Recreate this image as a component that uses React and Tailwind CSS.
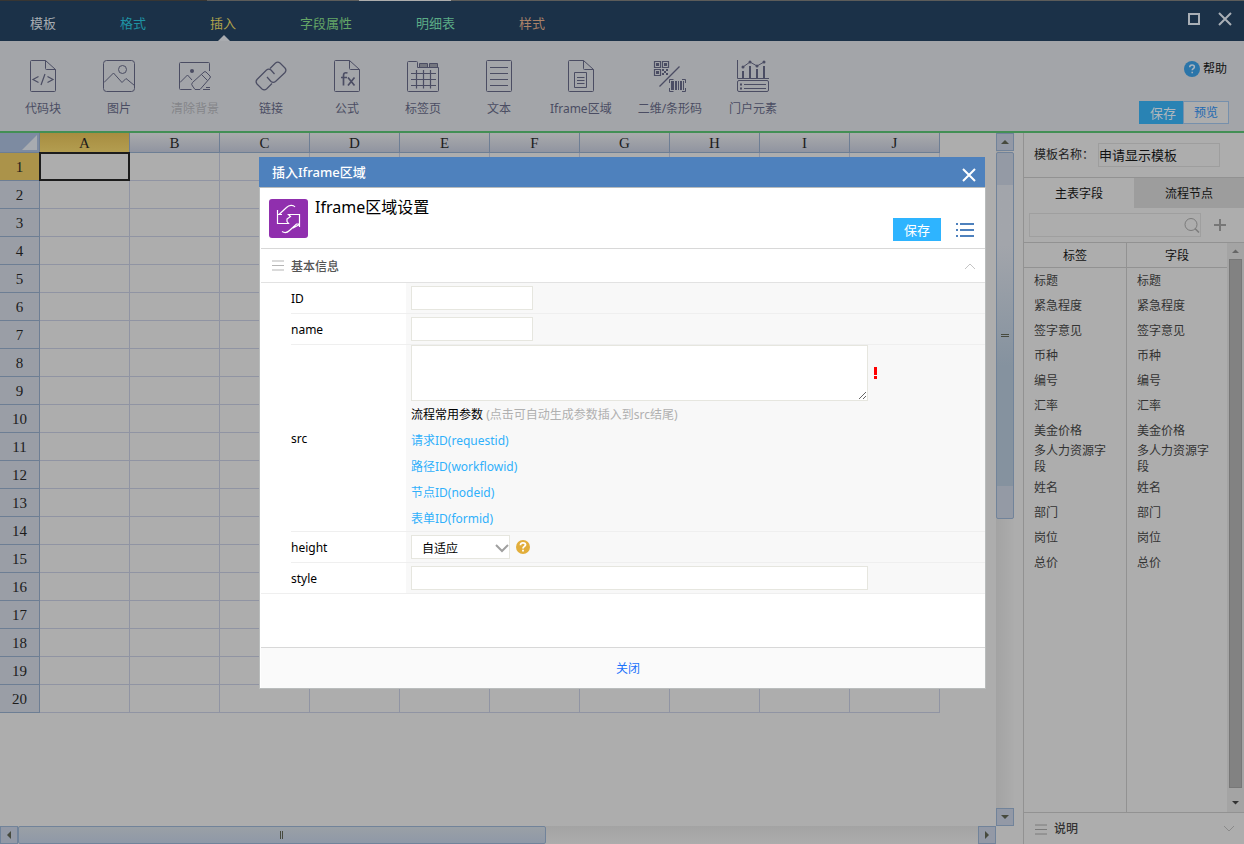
import React from "react";

const FONT = "font-['Noto_Sans','Noto_Sans_CJK_SC',sans-serif]";

const TABS = [
  { label: "模板", color: "text-[#a6abb1]" },
  { label: "格式", color: "text-[#1f93a4]" },
  { label: "插入", color: "text-[#b0a24c]", active: true },
  { label: "字段属性", color: "text-[#64a566]" },
  { label: "明细表", color: "text-[#5bab86]" },
  { label: "样式", color: "text-[#a98168]" },
];

function Icon({ children }) {
  return (
    <svg width="34" height="34" viewBox="0 0 34 34" fill="none" stroke="#4b4d63" strokeWidth="1" aria-hidden="true">
      {children}
    </svg>
  );
}

const PAGE = (
  <>
    <path d="M19.500 1.500H5.500a1 1 0 0 0-1 1v29a1 1 0 0 0 1 1h23a1 1 0 0 0 1-1V10.500Z" />
    <path d="M19.500 1.500v8a1 1 0 0 0 1 1h9" />
  </>
);

const TOOLS = [
  {
    label: "代码块",
    icon: (
      <Icon>
        {PAGE}
        <path d="M12.500 17.500 7 20.500l5.500 3M21.500 17.500 27 20.500l-5.500 3M19 15l-4 11" strokeWidth="1.200" />
      </Icon>
    ),
  },
  {
    label: "图片",
    icon: (
      <Icon>
        <rect x="1.500" y="1.500" width="31" height="31" rx="3" />
        <circle cx="20.500" cy="10.500" r="4" />
        <path d="M2 23.500 11.500 14 20 23.500l4-4 8.500 7" />
      </Icon>
    ),
  },
  {
    label: "清除背景",
    disabled: true,
    icon: (
      <Icon>
        <path d="M31.500 12V4.500a1 1 0 0 0-1-1h-28a1 1 0 0 0-1 1v25a1 1 0 0 0 1 1h11" />
        <circle cx="14" cy="12" r="2" fill="#4b4d63" stroke="none" />
        <path d="M2 23.500 9.500 16l4.500 5" />
        <path d="m14.500 23.500 11.500-10.500a1.500 1.500 0 0 1 2 0l4 4a1.500 1.500 0 0 1 0 2l-10 11.500h-5l-2.500-3.500a2.500 2.500 0 0 1 0-3.500ZM23.500 15.500l6 6M25 30.500h7M28 28.500h4" />
      </Icon>
    ),
  },
  {
    label: "链接",
    icon: (
      <Icon>
        <g strokeWidth="1.200">
          <path d="M16 9.500 21.500 4a3.500 3.500 0 0 1 4.500 0l5 5a3.500 3.500 0 0 1 0 4.500L21.500 22.500a3.500 3.500 0 0 1-4.500 0L13 18" />
          <path d="m20.500 15-3.500-4a3.500 3.500 0 0 0-4.500 0L3 20.500a3.500 3.500 0 0 0 0 4.500l5 5a3.500 3.500 0 0 0 4.500 0L18 24.500" />
        </g>
      </Icon>
    ),
  },
  {
    label: "公式",
    icon: (
      <Icon>
        {PAGE}
        <path d="M17.500 14c-3-.8-4 .2-4 3v9.500M11 18.500h6M18 18.500l6.500 8M24.500 18.500l-6.500 8" strokeWidth="1.700" />
      </Icon>
    ),
  },
  {
    label: "标签页",
    icon: (
      <Icon>
        <path d="M11.500 8.500v-5a1 1 0 0 0-1-1h-8a1 1 0 0 0-1 1v28a1 1 0 0 0 1 1h29a1 1 0 0 0 1-1v-23Z" />
        <path d="M13.500 8v-3.500h8V8M23.500 8v-3.500h8V8" fill="#74767f" />
        <path d="M5 14.500h25M5 20.500h25M5 26.500h25M10.500 11v18.500M17.500 11v18.500M24.500 11v18.500" strokeWidth="1.200" />
      </Icon>
    ),
  },
  {
    label: "文本",
    icon: (
      <Icon>
        <rect x="4.500" y="1.500" width="25" height="31" rx="1" />
        <path d="M8 8.500h18M8 14.500h18M8 20.500h18M8 26.500h18" />
      </Icon>
    ),
  },
  {
    label: "Iframe区域",
    icon: (
      <Icon>
        {PAGE}
        <path d="M10.500 13.500h12v15h-12ZM13 18.500h7.500M13 21.500h7.500M13 24.500h7.500" />
      </Icon>
    ),
  },
  {
    label: "二维/条形码",
    icon: (
      <Icon>
        <path d="M1.500 2.500h6v6h-6ZM9.500 2.500h6v6h-6ZM1.500 10.500h6v6h-6Z" strokeWidth="1.200" />
        <g fill="#4b4d63" stroke="none">
          <path d="M3 4h3v3H3ZM11 4h3v3h-3ZM3 12h3v3H3ZM9 10h2v2H9ZM13 10h2v2h-2ZM11 12h2v2h-2ZM9 14h2v2H9ZM13 14h2v2h-2Z" />
          <path d="M18 22h3v9h-3ZM22 22h2v9h-2ZM25 22h1v9h-1ZM27 22h2v9h-2ZM30 22h1v9h-1Z" />
        </g>
        <path d="M26.500 7.500 6.500 27.500" strokeWidth="1.200" />
        <path d="M16.500 24v-3.500h4M29 20.500h3.500V24M32.500 29v3.500H29M20.500 32.500h-4V29" />
      </Icon>
    ),
  },
  {
    label: "门户元素",
    icon: (
      <Icon>
        <path d="M1.500 1v18.500H33" />
        <path d="M7 12v8M14 7v13M21 10v10M28 7v13" strokeWidth="2" />
        <path d="m7 8 7-5 7 4 7-4" />
        <g fill="#4b4d63" stroke="none">
          <circle cx="7" cy="8" r="1.500" />
          <circle cx="14" cy="3" r="1.500" />
          <circle cx="21" cy="7" r="1.500" />
          <circle cx="28" cy="3" r="1.500" />
          <path d="M4 24.500h2v2H4ZM4 28.500h2v2H4Z" />
        </g>
        <rect x="1.500" y="21.500" width="31" height="11" rx="1.500" />
        <path d="M8 25.500h22M8 29.500h22" />
      </Icon>
    ),
  },
];

const COLUMNS = ["A", "B", "C", "D", "E", "F", "G", "H", "I", "J"];
const ROWS = Array.from({ length: 20 }, (_, i) => i + 1);

const FIELDS = ["标题", "紧急程度", "签字意见", "币种", "编号", "汇率", "美金价格", "多人力资源字段", "姓名", "部门", "岗位", "总价"];

const PARAMS = ["请求ID(requestid)", "路径ID(workflowid)", "节点ID(nodeid)", "表单ID(formid)"];

function Header() {
  return (
    <header className="shrink-0 bg-[#1b3148]">
      <div className="flex h-px">
        <div className="w-[207px] bg-[#383633]" />
        <div className="w-[152px] bg-[#5c5c5a]" />
        <div className="w-[92px] bg-[#adadad]" />
        <div className="flex-1 bg-[#5c5c5a]" />
      </div>
      <div className="flex h-10 justify-between">
        <nav className="flex gap-16 pl-[30px] text-[13px] leading-5">
          {TABS.map((t) => (
            <button key={t.label} type="button" className={"relative flex items-center pt-1 " + t.color}>
              {t.label}
              {t.active && (
                <svg className="absolute bottom-0 left-2" width="12" height="6" viewBox="0 0 12 6" aria-hidden="true">
                  <path d="M0 6 6 0l6 6Z" fill="#a9abaf" />
                </svg>
              )}
            </button>
          ))}
        </nav>
        <div className="flex items-start gap-[17px] pt-[11px] pr-3">
          <button type="button" aria-label="最大化">
            <svg width="14" height="14" viewBox="0 0 14 14" fill="none" stroke="#a9afb6" strokeWidth="2">
              <path d="M2 2h10v10H2Z" />
            </svg>
          </button>
          <button type="button" aria-label="关闭窗口">
            <svg width="14" height="14" viewBox="0 0 14 14" fill="none" stroke="#a9afb6" strokeWidth="2">
              <path d="m1 1 12 12M13 1 1 13" />
            </svg>
          </button>
        </div>
      </div>
    </header>
  );
}

function Toolbar() {
  return (
    <div className="flex h-[92px] shrink-0 justify-between border-b-2 border-[#438f55] bg-[#a3a5a9]">
      <div className="flex items-start gap-[26px] pt-[18px] pl-[18px]">
        {TOOLS.map((t) => (
          <button
            key={t.label}
            type="button"
            className={
              "flex min-w-[50px] flex-col items-center gap-[7px] text-xs leading-[18px] whitespace-nowrap " +
              (t.disabled ? "text-[#85868a]" : "text-[#4b4d63]")
            }
          >
            {t.icon}
            {t.label}
          </button>
        ))}
      </div>
      <div className="flex flex-col items-end justify-between pt-5 pr-[15px] pb-[7px]">
        <a href="#help" className="flex items-center gap-[3px] pr-[2px] text-xs leading-4 text-[#111]">
          <svg width="16" height="16" viewBox="0 0 16 16" aria-hidden="true">
            <circle cx="8" cy="8" r="8" fill="#2b75a9" />
            <path d="M5.700 6.300c0-1.500 1-2.300 2.400-2.300s2.300.8 2.300 2c0 1.600-2.200 1.700-2.200 3.300M8.200 10.700v1.600" fill="none" stroke="#a9b4bf" strokeWidth="1.500" />
          </svg>
          帮助
        </a>
        <div className="flex h-[23px] text-[13px] leading-5">
          <button type="button" className="w-11 bg-[#2983b4] pl-1 text-[#b0b7bc]">
            保存
          </button>
          <button type="button" className="w-[46px] border border-[#7690ac] bg-[#adadad] text-xs text-[#2269b1]">
            预览
          </button>
        </div>
      </div>
    </div>
  );
}

function Sheet() {
  return (
    <div className="min-h-0 flex-1 overflow-hidden">
      <table className="w-[940px] table-fixed border-separate border-spacing-0 font-['Liberation_Serif',serif] text-[15px] leading-[18px] text-[#1c1c1c]">
        <thead>
          <tr className="h-5">
            <th className="w-10 border-r border-b border-[#6d7e94] bg-[#7d8ba1] p-0">
              <svg className="ml-auto mr-[2px]" width="15" height="15" viewBox="0 0 15 15" aria-hidden="true">
                <path d="M15 0v15H0Z" fill="#a7abb0" />
              </svg>
            </th>
            {COLUMNS.map((c, i) => (
              <th
                key={c}
                className={
                  "border-r border-b border-[#6d7e94] p-0 font-normal " +
                  (i === 0 ? "bg-linear-to-b from-[#a78d40] to-[#b39d50]" : "bg-linear-to-b from-[#aaabac] to-[#9094a0]")
                }
              >
                {c}
              </th>
            ))}
          </tr>
        </thead>
        <tbody>
          {ROWS.map((r) => (
            <tr key={r} className="h-7">
              <th
                className={
                  "border-r border-b border-[#6d7e94] p-0 font-normal " + (r === 1 ? "bg-[#ab934a]" : "bg-[#9a9ea6]")
                }
              >
                {r}
              </th>
              {COLUMNS.map((c, i) => (
                <td key={c} className="relative border-r border-b border-[#9094a3] p-0">
                  {r === 1 && i === 0 && <div className="absolute -inset-px border-2 border-[#1c1c1c]" />}
                </td>
              ))}
            </tr>
          ))}
        </tbody>
      </table>
    </div>
  );
}

function ScrollButton({ d, label }) {
  return (
    <button
      type="button"
      aria-label={label}
      className="flex size-[18px] shrink-0 items-center justify-center border border-[#71839a] bg-[#9399a6]"
    >
      <svg width="8" height="8" viewBox="0 0 8 8" fill="#474a3e">
        <path d={d} />
      </svg>
    </button>
  );
}

function SheetArea() {
  return (
    <section className="flex min-w-0 flex-1">
      <div className="flex min-w-0 flex-1 flex-col">
        <Sheet />
        <div className="flex h-[18px] shrink-0 bg-linear-to-b from-[#a3a3a3] to-[#acacac]">
          <ScrollButton label="向左滚动" d="M6 0v8L2 4Z" />
          <div className="flex w-[53%] items-center justify-center gap-px rounded-xs border border-[#71839a] bg-linear-to-b from-[#9aa0a6] to-[#8f98a7]">
            <div className="h-2 w-px bg-[#474a3e]" />
            <div className="h-2 w-px bg-[#474a3e]" />
          </div>
          <div className="flex-1" />
          <ScrollButton label="向右滚动" d="M2 0v8l4-4Z" />
        </div>
      </div>
      <div className="mb-[18px] flex w-[18px] shrink-0 flex-col bg-linear-to-r from-[#a3a3a3] to-[#acacac]">
        <ScrollButton label="向上滚动" d="M0 6h8L4 2Z" />
        <div className="mt-px flex h-[53%] flex-col rounded-xs border border-[#71839a] bg-[#949aa5]">
          <div className="h-8" />
          <div className="flex flex-1 flex-col items-center justify-center gap-px bg-linear-to-b from-[#a2a5ab] from-20% to-[#85929f] to-60%">
            <div className="h-px w-2 bg-[#474a3e]" />
            <div className="h-px w-2 bg-[#474a3e]" />
          </div>
          <div className="h-8" />
        </div>
        <div className="flex-1" />
        <ScrollButton label="向下滚动" d="M0 2h8L4 6Z" />
      </div>
    </section>
  );
}

function Menu({ color }) {
  return (
    <svg width="12" height="11" viewBox="0 0 12 11" stroke={color} aria-hidden="true">
      <path d="M0 1h12M0 5.500h12M0 10h12" />
    </svg>
  );
}

function Sidebar() {
  return (
    <aside className="ml-[9px] flex w-[221px] shrink-0 flex-col border-l border-[#929292] text-xs leading-4">
      <div className="flex h-[45px] shrink-0 items-center gap-[4px] border-b border-[#929292] pl-[10px]">
        <label htmlFor="tpl" className="w-15 whitespace-nowrap text-[#222]">
          模板名称：
        </label>
        <input
          id="tpl"
          defaultValue="申请显示模板"
          className="h-6 w-[122px] border border-[#9e9e9e] bg-transparent pb-[2px] text-[13px] text-[#111] outline-none"
        />
      </div>
      <div className="flex h-[30px] shrink-0 pb-0 text-[#111]">
        <button type="button" className="flex-1 pt-[2px]">
          主表字段
        </button>
        <button type="button" className="flex-1 bg-[#9d9d9d] pt-[2px]">
          流程节点
        </button>
      </div>
      <div className="flex h-[34px] shrink-0 items-center gap-[13px] pl-[5px]">
        <div className="flex h-6 w-[172px] items-center border border-[#9f9f9f]">
          <input aria-label="搜索字段" className="h-full min-w-0 flex-1 bg-transparent px-1 outline-none" />
          <svg width="16" height="16" viewBox="0 0 16 16" fill="none" stroke="#7b7b7b" aria-hidden="true">
            <circle cx="7" cy="7.500" r="6" />
            <path d="m11 11.500 4 4" strokeWidth="1.500" />
          </svg>
        </div>
        <button type="button" aria-label="添加字段">
          <svg width="12" height="12" viewBox="0 0 12 12" stroke="#777" strokeWidth="2">
            <path d="M6 0v12M0 6h12" />
          </svg>
        </button>
      </div>
      <div className="flex min-h-0 flex-1 border-t border-[#929292]">
        <table className="h-full flex-1 table-fixed border-separate border-spacing-0 text-[#333]">
          <thead>
            <tr className="h-[25px]">
              <th className="w-[103px] border-r border-b border-[#929292] p-0 pt-[2px] font-normal text-[#111]">标签</th>
              <th className="border-b border-[#929292] p-0 pt-[2px] font-normal text-[#111]">字段</th>
            </tr>
          </thead>
          <tbody>
            {FIELDS.map((f) => (
              <tr key={f} className="h-[25px]">
                <td className="border-r border-[#929292] py-0 pr-4 pl-[10px]">{f}</td>
                <td className="py-0 pr-4 pl-[10px]">{f}</td>
              </tr>
            ))}
            <tr>
              <td className="border-r border-[#929292] p-0" />
              <td className="p-0" />
            </tr>
          </tbody>
        </table>
        <div className="flex w-[17px] shrink-0 flex-col items-center bg-[#a4a4a4]">
          <svg width="17" height="16" viewBox="0 0 17 16" aria-hidden="true">
            <path d="M5 10h7L8.500 6.500Z" fill="#666" />
          </svg>
          <div className="w-[13px] flex-1 border border-[#777] bg-[#828282]" />
          <svg width="17" height="24" viewBox="0 0 17 24" aria-hidden="true">
            <path d="M5 13h7l-3.500 3.500Z" fill="#333" />
          </svg>
        </div>
      </div>
      <div className="flex h-8 shrink-0 items-center gap-[7px] border-t border-[#929292] pt-px pr-[9px] pl-[11px]">
        <Menu color="#7a7a7a" />
        <span className="flex-1 font-medium text-[#333]">说明</span>
        <svg width="12" height="8" viewBox="0 0 12 8" fill="none" stroke="#8a8a8a" aria-hidden="true">
          <path d="m1 1 5 5 5-5" />
        </svg>
      </div>
    </aside>
  );
}

function Row({ label, id, last, children }) {
  return (
    <div className={"flex " + (last ? "border-b border-[#efefef]" : "")}>
      <div className="w-[30px] shrink-0" />
      <label htmlFor={id} className={"flex w-[115px] shrink-0 items-center pt-[2px] " + (last ? "" : "border-b border-[#efefef]")}>
        {label}
      </label>
      <div className={"min-w-0 flex-1 bg-[#f8f8f8] pl-[5px] " + (last ? "" : "border-b border-[#efefef]")}>{children}</div>
    </div>
  );
}

const FIELD = "block h-6 border border-[#e6e6df] bg-white px-1 outline-none";

function Dialog() {
  return (
    <div className="absolute inset-0 flex items-center justify-center pt-[2px] pl-px">
      <div role="dialog" aria-labelledby="dlg" className="flex w-[727px] flex-col text-xs leading-4 text-black">
        <div className="mr-px flex h-[30px] items-center justify-between bg-[#4e81bd] pr-[9px] pl-[13px]">
          <h2 id="dlg" className="text-[13px] font-medium text-white">
            插入Iframe区域
          </h2>
          <button type="button" aria-label="关闭对话框" className="pt-[6px]">
            <svg width="14" height="14" viewBox="0 0 14 14" fill="none" stroke="#fff" strokeWidth="2">
              <path d="m1 1 12 12M13 1 1 13" />
            </svg>
          </button>
        </div>
        <div className="flex flex-col border border-[#b9bcbc] bg-white pl-px">
          <div className="flex h-[61px] border-b border-[#d8d8d8] pl-2">
            <svg className="mt-[11px] shrink-0" width="39" height="39" viewBox="0 0 39 39" fill="none" stroke="#fff" strokeWidth="1.200" aria-hidden="true">
              <rect width="39" height="39" rx="3" fill="#902fae" stroke="none" />
              <path d="M26 8c-2-2.500-6-2-8.500.5L10 15.500M8.500 11v13.500h11L18 22.500V20l3.500-2.500-2-2h11V28M8.500 15.500H13M30.500 25l-3 0-7 6.500c-2 2-5 2.500-7.500 1M30.500 25.500 24 29" />
            </svg>
            <h3 className="ml-[7px] flex-1 pt-2 text-base leading-[22px]">Iframe区域设置</h3>
            <div className="flex items-end gap-[15px] pr-[11px] pb-[7px]">
              <button type="button" className="h-[23px] w-12 bg-[#2eb4ff] text-[13px] text-white">
                保存
              </button>
              <button type="button" aria-label="列表" className="pb-[3px]">
                <svg width="18" height="16" viewBox="0 0 18 16" stroke="#4e81bd" strokeWidth="2">
                  <path d="M0 2h2M4 2h14M0 8h2M4 8h14M0 14h2M4 14h14" />
                </svg>
              </button>
            </div>
          </div>
          <div className="flex h-[34px] items-center gap-[7px] border-b border-[#e2e2e2] pr-[9px] pl-[11px]">
            <Menu color="#b5b5b5" />
            <span className="flex-1 pt-[2px] font-medium text-[#555]">基本信息</span>
            <svg width="12" height="8" viewBox="0 0 12 8" fill="none" stroke="#c4c4c4" aria-hidden="true">
              <path d="m1 7 5-5 5 5" />
            </svg>
          </div>
          <Row label="ID" id="f-id">
            <div className="py-[3px]">
              <input id="f-id" className={FIELD + " w-[122px]"} />
            </div>
          </Row>
          <Row label="name" id="f-name">
            <div className="py-[3px]">
              <input id="f-name" className={FIELD + " w-[122px]"} />
            </div>
          </Row>
          <Row label="src" id="f-src">
            <div className="flex items-center gap-[5px]">
              <textarea id="f-src" className="block h-14 w-[457px] resize border border-[#e6e6df] bg-white px-1 outline-none" />
              <svg width="4" height="12" viewBox="0 0 4 12" fill="#f00" aria-hidden="true">
                <path d="M1 0h3v8H1ZM1 9h3v3H1Z" />
              </svg>
            </div>
            <p className="pt-[2px] leading-6">
              流程常用参数 <span className="text-[#b0b0b0]">(点击可自动生成参数插入到src结尾)</span>
            </p>
            {PARAMS.map((p) => (
              <p key={p} className="pt-[2px] leading-6">
                <a href="#param" className="text-[#30b0fb]">
                  {p}
                </a>
              </p>
            ))}
          </Row>
          <Row label="height" id="f-height">
            <div className="flex items-center gap-[6px] py-[3px]">
              <div className="relative">
                <select id="f-height" className="block h-6 w-[99px] appearance-none border border-[#e6e6df] bg-white pt-[4px] pl-[10px] outline-none">
                  <option>自适应</option>
                </select>
                <svg className="pointer-events-none absolute top-2 right-px" width="14" height="10" viewBox="0 0 14 10" fill="none" stroke="#a0a0a0" strokeWidth="2" aria-hidden="true">
                  <path d="m1 2 6 6 6-6" />
                </svg>
              </div>
              <svg width="14" height="14" viewBox="0 0 14 14" aria-hidden="true">
                <circle cx="7" cy="7" r="7" fill="#e2ae3b" />
                <path d="M4.500 5.200C4.500 3.500 5.500 2.800 7 2.800s2.500.8 2.500 2C9.500 6.500 7 6.300 7 8.500M7 9.800v1.800" fill="none" stroke="#fff" strokeWidth="1.800" />
              </svg>
            </div>
          </Row>
          <Row label="style" id="f-style" last>
            <div className="py-[3px]">
              <input id="f-style" className={FIELD + " w-[457px]"} />
            </div>
          </Row>
          <div className="h-[53px]" />
          <div className="flex h-[41px] items-center justify-center border-t border-[#d8d8d8] bg-[#fafafa] pt-[2px] pl-[10px]">
            <button type="button" className="text-[#1b72fa]">
              关闭
            </button>
          </div>
        </div>
      </div>
    </div>
  );
}

export default function App() {
  return (
    <div className={"relative flex h-screen flex-col overflow-hidden bg-[#adadad] " + FONT}>
      <Header />
      <Toolbar />
      <main className="flex min-h-0 flex-1">
        <SheetArea />
        <Sidebar />
      </main>
      <Dialog />
    </div>
  );
}
